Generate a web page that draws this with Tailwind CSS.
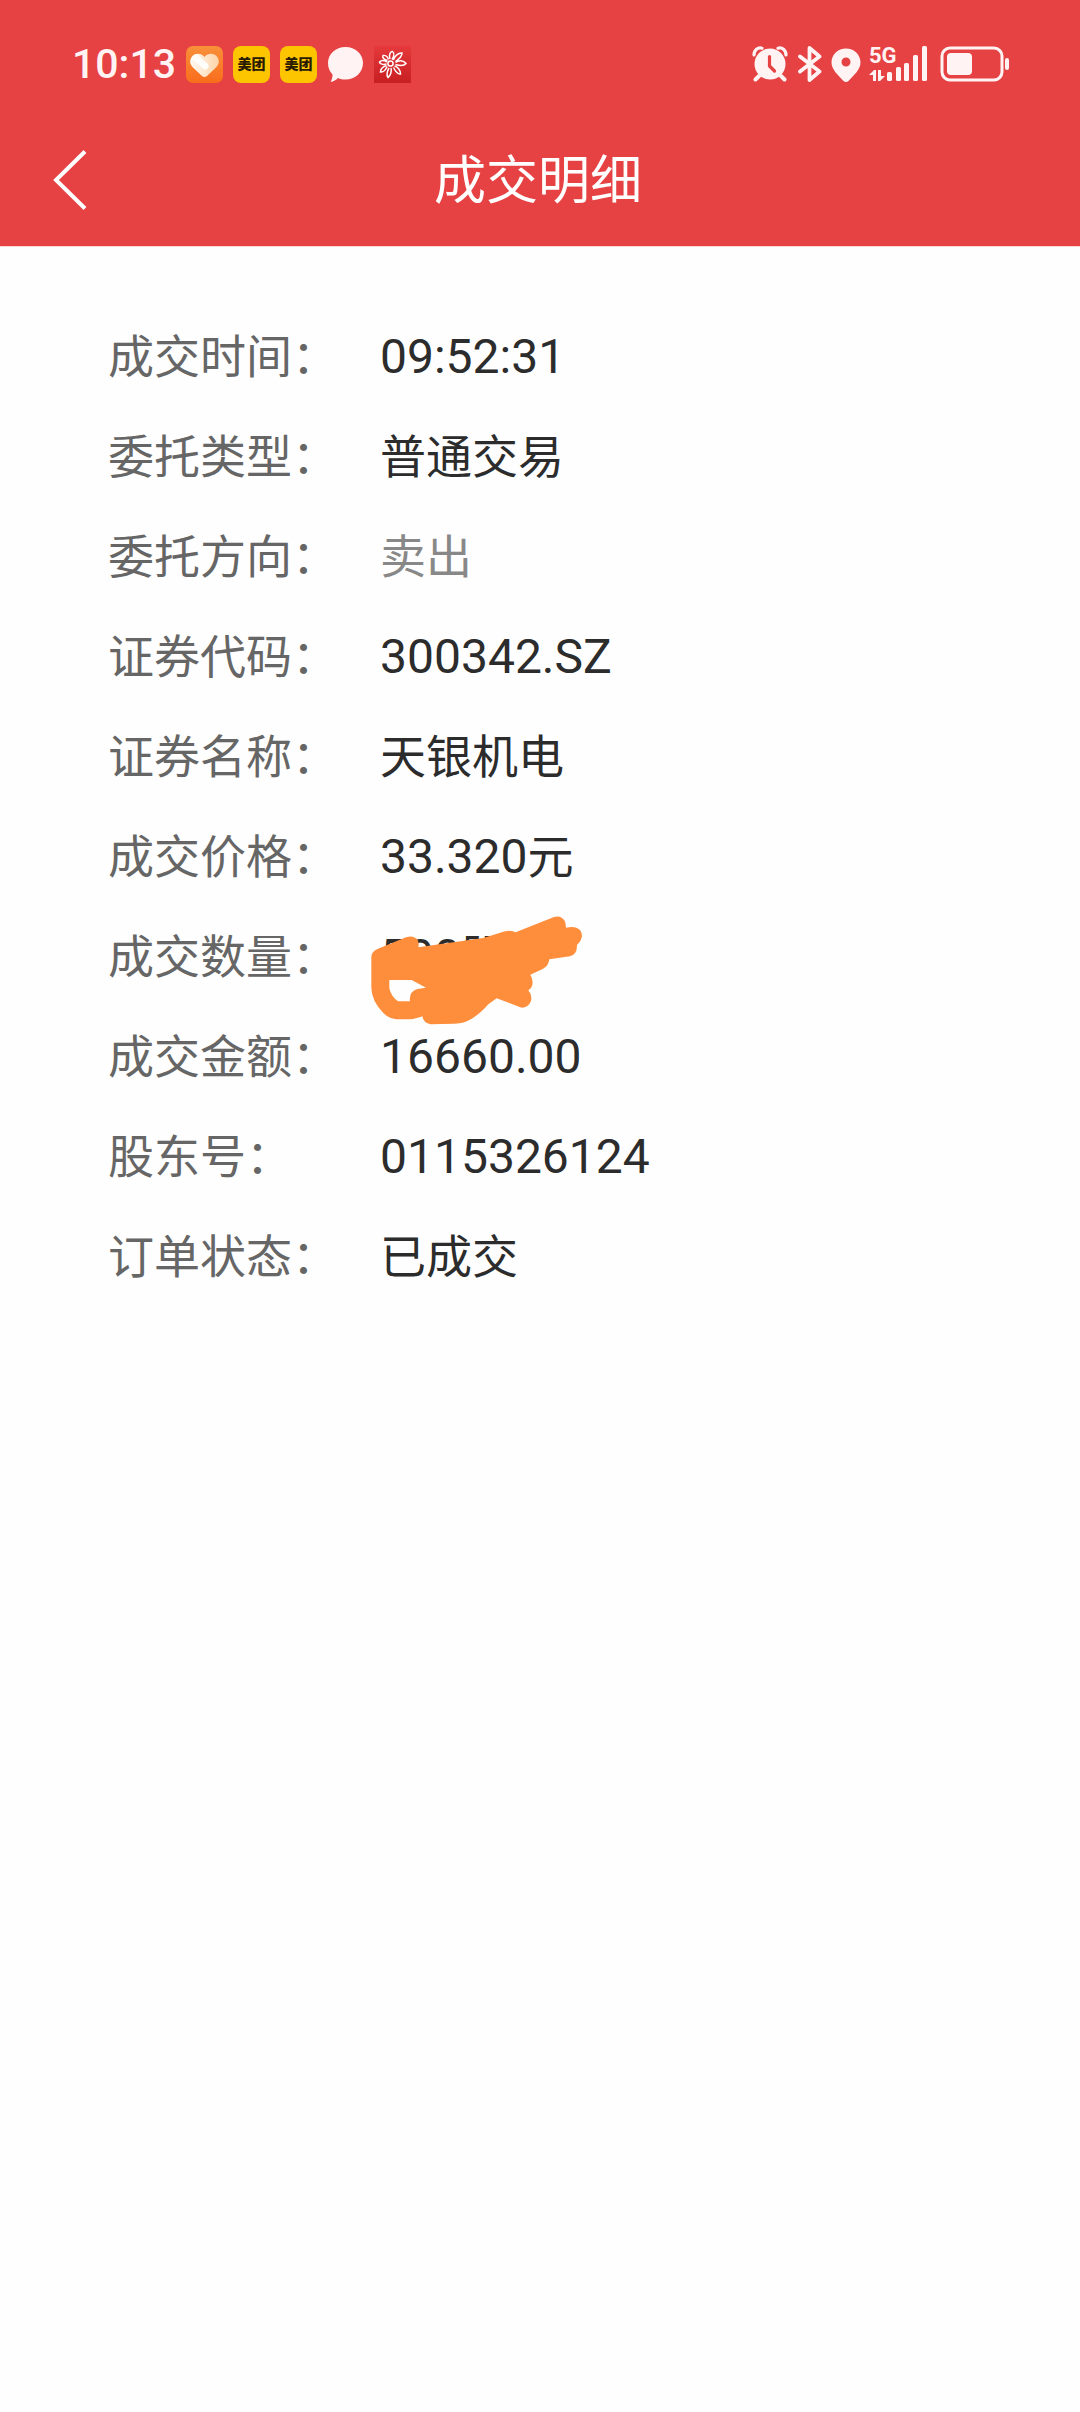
<!DOCTYPE html>
<html lang="zh-CN">
<head>
<meta charset="utf-8">
<meta name="viewport" content="width=device-width, initial-scale=1">
<title>成交明细</title>
<script src="https://cdn.jsdelivr.net/npm/@tailwindcss/browser@4"></script>
</head>
<body class="min-h-screen bg-[#fefefe] font-['Roboto','Noto_Sans_CJK_SC',sans-serif]">
<header class="border-b border-[#fbd3d3] bg-[#e64143] text-white">
  <!-- Status bar -->
  <div class="flex h-[114px] items-center justify-between pt-[14px] pr-[70px] pl-[72px]">
    <div class="flex items-center gap-[10px]">
      <span class="w-[104px] text-[41px] leading-none font-medium whitespace-nowrap text-[#fff3f3]">10:13</span>
      <svg class="size-[37px]" viewBox="0 0 37 37" aria-hidden="true">
        <defs>
          <linearGradient id="orange" x1="0" y1="0" x2="0" y2="1"><stop offset="0" stop-color="#f9903a"/><stop offset="1" stop-color="#f86d1c"/></linearGradient>
          <linearGradient id="heart" x1="0" y1="0" x2="1" y2="0"><stop offset="0" stop-color="#fffaf2"/><stop offset="1" stop-color="#fdd3a8"/></linearGradient>
        </defs>
        <rect width="37" height="37" rx="7" fill="url(#orange)"/>
        <path d="M18.500 11C15 6.500 9 7 6 10.500c-3 4-2 8 1 11l9 8.500q2.500 2 5 0l9-8.500c3-3 4-7 1-11C28 7 22 6.500 18.500 11z" fill="url(#heart)"/>
        <path d="M10 12l9 8" stroke="#fffdfa" stroke-width="7" stroke-linecap="round"/>
      </svg>
      <span class="flex size-[37px] items-center justify-center rounded-lg bg-[#fdc400] text-[14px] leading-none font-black whitespace-nowrap text-[#2a1a00]">美团</span>
      <span class="flex size-[37px] items-center justify-center rounded-lg bg-[#fdc400] text-[14px] leading-none font-black whitespace-nowrap text-[#2a1a00]">美团</span>
      <svg class="size-[37px]" viewBox="0 0 37 37" aria-hidden="true">
        <path d="M18.500 1C28.500 1 36 8 36 17s-7.500 16.500-17.500 16.500c-3 0-5.500-.5-7.500-1.500-2 2-4.500 3.500-7.500 4 1.500-2.500 2-5 2-7.500C2.500 25.500 1 21.500 1 17 1 8 8.500 1 18.500 1z" fill="#fff3f3"/>
      </svg>
      <svg class="size-[37px]" viewBox="0 0 37 37" fill="none" stroke="#fff" stroke-width="1.500" aria-hidden="true">
        <defs><linearGradient id="red" x1="0" y1="0" x2="0" y2="1"><stop offset="0" stop-color="#e5393b"/><stop offset="1" stop-color="#c81f22"/></linearGradient></defs>
        <rect width="37" height="37" fill="url(#red)" stroke="none"/>
        <circle cx="16.500" cy="17.500" r="2.600"/>
        <path d="M16 13C14.500 9 16.500 5 18.500 5.500c2 1.500 1.500 5-.5 8M19.500 14c1-4 5-7.500 8.500-7 0 3-3.500 6.500-6.500 8.500M21.500 16.500c3-2.500 8-2.500 10.500 1-2 2.500-7 2-10.500 1M20.500 20c3 .5 6 4 6 8-3 .5-5.500-3.500-7-6.500M17 22c1 3-.5 8-3 9.500-2-2-.5-7 1-9.500M13 20.500c-1 3-3.500 6-6.500 5.500 0-3 3-5.500 6-6.500M12.500 18C9 19 6 18 5.500 16c2-2 5-1.500 7.500 0M13.500 14.500C10 14 8 11.500 9 9.500c2-.5 4.500 1 5.500 4"/>
      </svg>
    </div>
    <div class="flex items-center">
      <svg class="h-9 w-[36px]" viewBox="0 0 36 36" aria-hidden="true">
        <circle cx="18" cy="18" r="15.500" fill="#fff3f3"/>
        <path d="M2 9C2 4 6 1 10 2.200M34 9C34 4 30 1 26 2.200" fill="none" stroke="#fff3f3" stroke-width="3.200" stroke-linecap="round"/>
        <path d="M7 30l-3.500 3.500M29 30l3.500 3.500" stroke="#fff3f3" stroke-width="4" stroke-linecap="round"/>
        <path d="M17.500 10.500v9.500l5 5" fill="none" stroke="#e64143" stroke-width="3.200" stroke-linecap="round"/>
      </svg>
      <svg class="ml-[10px] h-9 w-6" viewBox="0 0 24 36" fill="none" stroke="#fff3f3" stroke-width="3.800" stroke-linecap="round" stroke-linejoin="round" aria-hidden="true">
        <path d="M2 10.500l19.500 15L11.500 34V2l10 8.500L2 25.500"/>
      </svg>
      <svg class="ml-[9px] h-9 w-[30px]" viewBox="0 0 30 36" aria-hidden="true">
        <path fill-rule="evenodd" d="M15 2.500C23 2.500 29.500 8.500 29.500 16.500c0 7-6.500 12.500-12 18.500q-2.500 2-5 0C7 29 .5 23.500.5 16.500.5 8.500 7 2.500 15 2.500zM15 11.500a4.500 4.500 0 1 0 0 9 4.500 4.500 0 1 0 0-9z" fill="#fff3f3"/>
      </svg>
      <svg class="ml-2 h-11 w-[60px]" viewBox="0 -4 60 44" fill="#fff3f3" aria-hidden="true">
        <text x="0" y="17" font-family="Liberation Sans Narrow, Roboto, sans-serif" font-size="22" font-weight="700">5G</text>
        <path d="M0 29l5-5h2v11H4v-6zM9 24h3v6h4l-5 5H9z"/>
        <rect x="18" y="26" width="5" height="9" rx="1.500"/>
        <rect x="27" y="21" width="5" height="14" rx="1.500"/>
        <rect x="35" y="17" width="5" height="18" rx="1.500"/>
        <rect x="44" y="9" width="5" height="26" rx="1.500"/>
        <rect x="53" y="0" width="5" height="35" rx="1.500"/>
      </svg>
      <svg class="ml-[11px] h-9 w-[70px]" viewBox="0 0 70 36" fill="#fff3f3" aria-hidden="true">
        <rect x="2" y="2" width="60" height="32" rx="8" fill="none" stroke="#fff3f3" stroke-width="3"/>
        <rect x="7" y="7" width="25" height="22" rx="4"/>
        <rect x="65" y="12" width="4" height="12" rx="2"/>
      </svg>
    </div>
  </div>
  <!-- Title bar -->
  <div class="grid grid-cols-[136px_1fr_140px] items-center">
    <button type="button" aria-label="返回" class="flex h-[132px] items-center pl-[52px]">
      <svg class="h-[60px] w-9" viewBox="0 0 36 60" fill="none" stroke="#fff" stroke-width="4" aria-hidden="true"><path d="M33 1.500L4 30l29 28.500"/></svg>
    </button>
    <h1 class="pt-1 text-center text-[52px] leading-[60px]">成交明细</h1>
  </div>
</header>

<main class="pt-[60px] pr-10 pl-[108px] text-[46px] leading-[100px] text-[#2c2c2c]">
  <dl class="grid grid-cols-[272px_1fr]">
    <dt class="text-[#666]">成交时间：</dt><dd class="text-[48px]">09:52:31</dd>
    <dt class="text-[#666]">委托类型：</dt><dd>普通交易</dd>
    <dt class="text-[#666]">委托方向：</dt><dd class="text-[#888]">卖出</dd>
    <dt class="text-[#666]">证券代码：</dt><dd class="text-[48px]">300342.SZ</dd>
    <dt class="text-[#666]">证券名称：</dt><dd>天银机电</dd>
    <dt class="text-[#666]">成交价格：</dt><dd><span class="text-[48px]">33.320</span>元</dd>
    <dt class="text-[#666]">成交数量：</dt>
    <dd class="relative"><span class="text-[48px]">500</span>股
      <!-- Marker strokes hiding the quantity -->
      <svg class="absolute -top-4 -left-[30px] h-[150px] w-[260px]" viewBox="0 0 780 450" aria-hidden="true">
        <path fill="#ff8e3c" fill-rule="evenodd" d="M64 197Q65 180 84 173L168 139Q190 131 203 147Q208 157 205 169L400 141L465 121Q483 116 497 124L612 78Q632 72 643 88Q648 96 648 110Q680 103 692 120Q700 135 691 150L681 162Q682 190 660 196L598 205Q596 225 578 234L541 251Q550 265 547 282Q545 292 535 298Q547 312 543 330Q535 350 515 350L440 322L415 340Q385 375 352 390Q335 398 310 398L242 400Q220 396 217 376Q195 384 182 385H138Q115 382 100 366Q65 330 64 290ZM118 267V292Q124 318 144 331H180Q176 302 202 294L228 290L185 267Z"/>
      </svg>
    </dd>
    <dt class="text-[#666]">成交金额：</dt><dd class="text-[48px]">16660.00</dd>
    <dt class="text-[#666]">股东号：</dt><dd class="text-[48px]">0115326124</dd>
    <dt class="text-[#666]">订单状态：</dt><dd>已成交</dd>
  </dl>
</main>
</body>
</html>
